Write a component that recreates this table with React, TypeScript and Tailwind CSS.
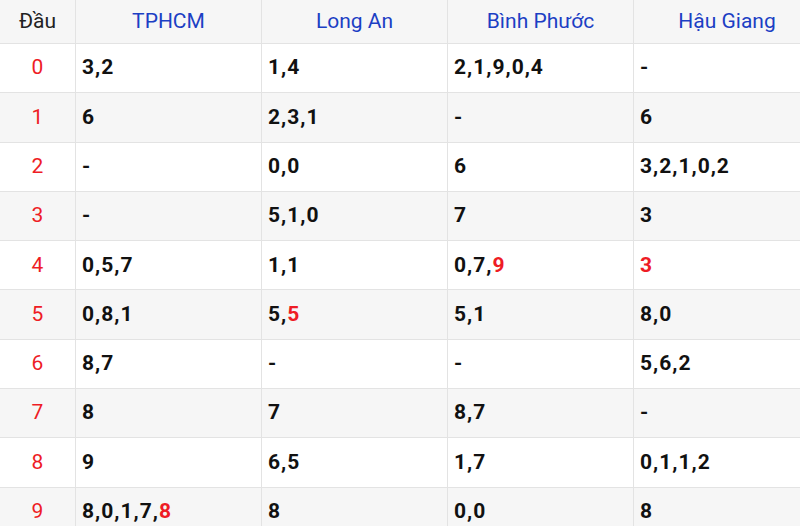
import React from 'react';

type Cell = string | [string, string];

const heads = ['TPHCM', 'Long An', 'Bình Phước', 'Hậu Giang'];

// each cell: plain text, or [black part, red part]
const rows: Cell[][] = [
  ['3,2', '1,4', '2,1,9,0,4', '-'],
  ['6', '2,3,1', '-', '6'],
  ['-', '0,0', '6', '3,2,1,0,2'],
  ['-', '5,1,0', '7', '3'],
  ['0,5,7', '1,1', ['0,7,', '9'], ['', '3']],
  ['0,8,1', ['5,', '5'], '5,1', '8,0'],
  ['8,7', '-', '-', '5,6,2'],
  ['8', '7', '8,7', '-'],
  ['9', '6,5', '1,7', '0,1,1,2'],
  [['8,0,1,7,', '8'], '8', '0,0', '8'],
];

const grid = 'grid w-[820px] grid-cols-[76px_186px_186px_186px_186px]';

export default function App() {
  return (
    <div className="h-[526px] w-[800px] overflow-hidden bg-white font-['Roboto',sans-serif]">
      <div className={`${grid} h-[44px] border-b border-[#e3e3e3] bg-[#f6f6f6] text-[21px]`}>
        <div className="flex items-center justify-center border-r border-[#e3e3e3] text-[#222]">Đầu</div>
        {heads.map((h, i) => (
          <div
            key={h}
            className={`flex items-center justify-center text-[#1c3fc4] ${i < 3 ? 'border-r border-[#e3e3e3]' : ''}`}
          >
            {h}
          </div>
        ))}
      </div>
      {rows.map((r, i) => (
        <div
          key={i}
          className={`${grid} h-[49.3px] border-b border-[#e3e3e3] ${i % 2 ? 'bg-[#f6f6f6]' : 'bg-white'}`}
        >
          <div className="flex items-center justify-center border-r border-[#e3e3e3] text-[21px] text-[#ee1c25]">
            {i}
          </div>
          {r.map((c, j) => (
            <div
              key={j}
              className={`flex items-center pl-[6px] text-[21px] font-bold tracking-[1px] text-[#111] ${j < 3 ? 'border-r border-[#e3e3e3]' : ''}`}
            >
              {typeof c === 'string' ? (
                c
              ) : (
                <span>
                  {c[0]}
                  <span className="text-[#ee1c25]">{c[1]}</span>
                </span>
              )}
            </div>
          ))}
        </div>
      ))}
    </div>
  );
}
